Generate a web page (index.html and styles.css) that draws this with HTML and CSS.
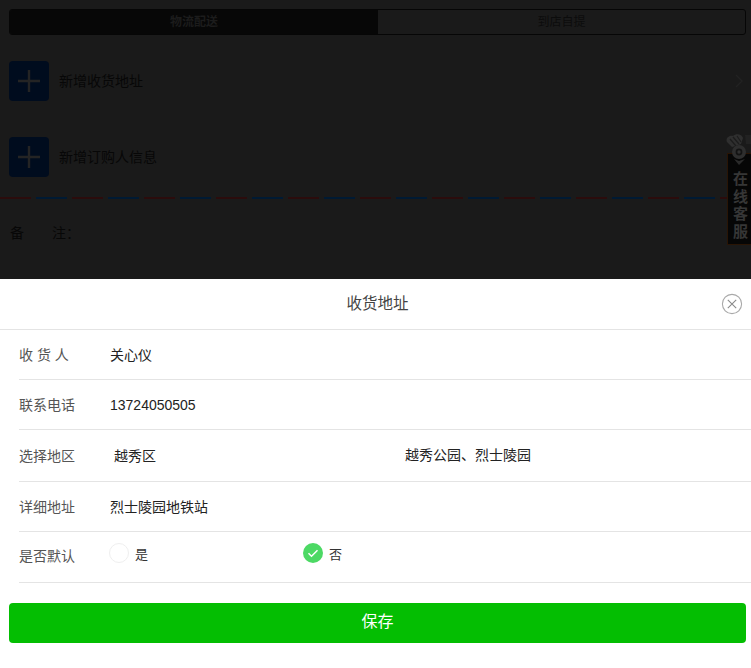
FILE: index.html
```html
<!DOCTYPE html>
<html lang="zh-CN">
<head>
<meta charset="utf-8">
<title>收货地址</title>
<link rel="stylesheet" href="styles.css">
</head>
<body>
<main class="page">
  <div class="tabs">
    <div class="tab tab-on">物流配送</div>
    <div class="tab">到店自提</div>
  </div>
  <div class="add-row add-first">
    <span class="plus"><svg width="22" height="22" viewBox="0 0 22 22"><path d="M0 11h22M11 0v22" stroke="#242424" stroke-width="2.4" fill="none"/></svg></span>
    <span class="add-text">新增收货地址</span>
    <svg class="chev" width="9" height="14" viewBox="0 0 9 14"><path d="M1 1l6 6-6 6" stroke="#222" stroke-width="1.3" fill="none"/></svg>
  </div>
  <div class="add-row add-second">
    <span class="plus"><svg width="22" height="22" viewBox="0 0 22 22"><path d="M0 11h22M11 0v22" stroke="#242424" stroke-width="2.4" fill="none"/></svg></span>
    <span class="add-text">新增订购人信息</span>
  </div>
  <div class="airmail"></div>
  <div class="remark"><span>备</span><span>注：</span></div>
</main>

<div class="service">
  <div class="service-box">在线客服</div>
  <svg class="chef" width="26" height="32" viewBox="0 0 26 32">
    <path d="M1 8C-1 4 4 1 7 2c3-3 9-2 10 2l-2 6-9 3z" fill="#2f2f2f"/>
    <path d="M4 5l6 7M7 3l6 7M11 2l4 6" stroke="#1c1c1c" stroke-width="1.2"/>
    <circle cx="13" cy="18" r="7" fill="#2e2e2e"/>
    <circle cx="13" cy="18" r="3.4" fill="#131313"/>
    <circle cx="13" cy="18" r="1.7" fill="#303030"/>
    <path d="M8 25l5 6 6-6-6 2z" fill="#2a2a2a"/>
    <path d="M19 1h7v9h-6z" fill="#222"/>
  </svg>
</div>

<section class="sheet">
  <header class="sheet-head">
    <h1 class="sheet-title">收货地址</h1>
    <svg class="close" width="22" height="22" viewBox="0 0 22 22"><circle cx="11" cy="11" r="9.6" fill="none" stroke="#a9a9a9" stroke-width="1.1"/><path d="M6.8 6.8l8.4 8.4M15.2 6.8l-8.4 8.4" stroke="#8a8a8a" stroke-width="1.1"/></svg>
  </header>
  <div class="row row-a"><span class="label">收 货 人</span><span class="value">关心仪</span></div>
  <div class="row row-a"><span class="label">联系电话</span><span class="value value-num">13724050505</span></div>
  <div class="row row-b"><span class="label">选择地区</span><span class="value area">越秀区</span><span class="value spot">越秀公园、烈士陵园</span></div>
  <div class="row row-a"><span class="label">详细地址</span><span class="value">烈士陵园地铁站</span></div>
  <div class="row row-c">
    <span class="label label-low">是否默认</span>
    <span class="choice choice-yes"><i class="radio"></i>是</span>
    <span class="choice"><svg class="radio-on" width="20" height="20" viewBox="0 0 20 20"><circle cx="10" cy="10" r="10" fill="#4cd964"/><path d="M5.5 10.3l3 3 6-6" fill="none" stroke="#fff" stroke-width="1.5"/></svg>否</span>
  </div>
  <div class="save-wrap"><button class="save" type="button">保存</button></div>
</section>
</body>
</html>
```

FILE: styles.css
```css
* { box-sizing: border-box; }
html, body { margin: 0; height: 668px; overflow: hidden; }
body {
  position: relative;
  background: #1a1a1a;
  font-family: "Liberation Sans", "Noto Sans CJK SC", sans-serif;
  color: #000;
}
.page { height: 279px; padding-top: 9px; background: #1a1a1a; }
.tabs {
  display: flex;
  margin: 0 5px 0 9px;
  height: 26px;
  border: 1px solid #060606;
  border-radius: 3px;
  overflow: hidden;
  font-size: 12px;
}
.tab { flex: 1; text-align: center; line-height: 24px; color: #0c0c0c; }
.tab-on { background: #070707; color: #1c1c1c; font-weight: bold; flex: 0 0 368px; }
.add-row { display: flex; align-items: center; padding-left: 9px; position: relative; }
.add-first { margin-top: 26px; }
.add-second { margin-top: 36px; }
.plus {
  width: 40px; height: 40px;
  border-radius: 4px;
  background: #000c1e;
  display: flex; align-items: center; justify-content: center;
}
.add-text { margin-left: 10px; padding-bottom: 2px; font-size: 14px; color: #070707; }
.chev { position: absolute; right: 7px; top: 13px; }
.airmail {
  margin-top: 20px;
  height: 2px;
  background: repeating-linear-gradient(90deg, #2b0c0c 0 31px, #1a1a1a 31px 36px, #001a33 36px 67px, #1a1a1a 67px 72px);
}
.remark { display: flex; gap: 28px; padding: 23px 0 0 10px; font-size: 14px; color: #070707; }

.service { position: absolute; right: 0; top: 134px; width: 24px; height: 112px; }
.chef { position: absolute; left: -1px; top: 0; }
.service-box {
  position: absolute; left: 0; top: 19px;
  width: 24px; height: 92px;
  padding: 16px 0 0 5px;
  background: #060606;
  border: 1px solid #2a1505;
  border-right: 0;
  color: #363636;
  font-size: 15px;
  font-weight: bold;
  line-height: 17.5px;
}

.sheet {
  position: absolute; left: 0; top: 279px;
  width: 751px; height: 389px;
  background: #fff;
}
.sheet-head {
  height: 51px;
  border-bottom: 1px solid #e4e4e4;
  display: flex; align-items: center; justify-content: center;
  position: relative;
  padding: 0 0 4px 4px;
}
.sheet-title { margin: 0; font-size: 15.5px; font-weight: normal; color: #444; }
.close { position: absolute; right: 8px; top: 14px; }
.row {
  margin-left: 19px;
  border-bottom: 1px solid #e4e4e4;
  display: flex;
  align-items: center;
  font-size: 14px;
}
.row-a { height: 50px; }
.row-b { height: 52px; }
.row-c { height: 51px; }
.label { flex: 0 0 91px; color: #555; }
.label-low { padding-bottom: 4px; }
.value { color: #222; }
.row-a .label, .row-a .value { padding-bottom: 1px; }
.row-a .value-num { padding-bottom: 0; }
.area { margin-left: 4px; flex: 0 0 291px; padding-bottom: 2px; }
.spot { padding-bottom: 4px; }
.row-b .label { padding-bottom: 2px; }
.choice { display: flex; align-items: center; gap: 6px; font-size: 13px; color: #333; padding-bottom: 8px; }
.choice-yes { flex: 0 0 194px; margin-left: -1px; gap: 6px; }
.radio { display: block; width: 20px; height: 20px; border: 1px solid #efefef; border-radius: 50%; }
.radio-on { display: block; }
.save-wrap { padding: 20px 5px 0 9px; }
.save {
  display: block; width: 100%; height: 40px;
  border: 0; border-radius: 4px;
  padding: 0 0 7px;
  background: #04be02;
  color: #fff;
  font-family: inherit;
  font-size: 16px;
}
```
